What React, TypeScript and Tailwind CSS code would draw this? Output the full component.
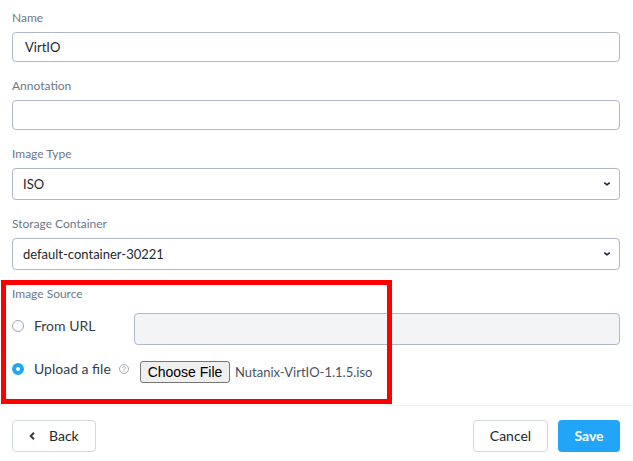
import { useRef, useState } from "react";
import type { ReactNode } from "react";

const control =
  "w-full rounded border border-[#b2b8c7] bg-white text-[13px] leading-5 text-[#22272e] outline-none";

function Field({ id, label, children }: { id: string; label: string; children: ReactNode }) {
  return (
    <div className="flex flex-col gap-1.5">
      <label htmlFor={id} className="text-xs leading-4 text-[#6b7888]">
        {label}
      </label>
      {children}
    </div>
  );
}

function SelectField({ id, label, options }: { id: string; label: string; options: string[] }) {
  return (
    <Field id={id} label={label}>
      <div className="relative flex">
        <select id={id} className={`${control} h-8 appearance-none pr-8 pl-2.5`}>
          {options.map((option) => (
            <option key={option}>{option}</option>
          ))}
        </select>
        <svg
          viewBox="0 0 6 4"
          className="pointer-events-none absolute top-3.5 right-2.5 h-1 w-1.5"
          fill="none"
          stroke="#1b1d3a"
          strokeWidth="1.6"
          aria-hidden="true"
        >
          <path d="M0.3 0.7 L3 2.8 L5.7 0.7" />
        </svg>
      </div>
    </Field>
  );
}

const radio =
  "h-3 w-3 shrink-0 appearance-none rounded-full border border-[#9aa5b5] bg-white checked:border-4 checked:border-[#22a5f7]";

export default function App() {
  const picker = useRef<HTMLInputElement>(null);
  const [source, setSource] = useState("file");
  const [fileName, setFileName] = useState("Nutanix-VirtIO-1.1.5.iso");

  return (
    <form
      className="bg-white font-['Lato','Liberation_Sans',sans-serif]"
      onSubmit={(event) => event.preventDefault()}
    >
      <div className="flex flex-col gap-4 px-3 pt-2.5 pr-[13px]">
        <Field id="name" label="Name">
          <input id="name" type="text" defaultValue="VirtIO" className={`${control} h-[30px] px-3`} />
        </Field>
        <Field id="annotation" label="Annotation">
          <input id="annotation" type="text" className={`${control} h-[30px] px-3`} />
        </Field>
        <SelectField id="type" label="Image Type" options={["ISO", "DISK"]} />
        <SelectField id="container" label="Storage Container" options={["default-container-30221"]} />

        <div role="radiogroup" aria-labelledby="source-title" className="relative pb-[22px]">
          <div id="source-title" className="text-xs leading-4 text-[#6b7888]">
            Image Source
          </div>
          <div className="mt-[11px] flex items-start">
            <label className="flex h-8 w-[122px] shrink-0 items-center gap-2.5 pb-1.5 text-sm text-[#343c49]">
              <input
                type="radio"
                name="source"
                className={radio}
                checked={source === "url"}
                onChange={() => setSource("url")}
              />
              From URL
            </label>
            <input
              type="text"
              aria-label="Image URL"
              disabled={source !== "url"}
              className="h-8 min-w-0 flex-1 rounded border border-[#b2b8c7] bg-white px-3 text-[13px] disabled:bg-[#f2f4f6]"
            />
          </div>
          <div className="mt-3.5 flex items-start">
            <div className="flex w-32 shrink-0 items-center gap-2">
              <label className="flex items-center gap-2.5 text-sm text-[#343c49]">
                <input
                  type="radio"
                  name="source"
                  className={radio}
                  checked={source === "file"}
                  onChange={() => setSource("file")}
                />
                Upload a file
              </label>
              <svg viewBox="0 0 10 10" className="h-2.5 w-2.5" fill="none" stroke="#8d99a8" strokeWidth="0.8" aria-hidden="true">
                <circle cx="5" cy="5" r="4.5" />
                <path d="M3.6 4 C3.6 2.1 6.5 2.1 6.5 3.8 C6.5 4.9 5 4.8 5 6 M5 6.9 V7.8" />
              </svg>
            </div>
            <div className="flex items-center gap-[5px] pt-0.5">
              <input
                ref={picker}
                type="file"
                hidden
                aria-label="Image file"
                onChange={(event) => setFileName(event.target.files?.[0]?.name ?? "No file chosen")}
              />
              <button
                type="button"
                onClick={() => picker.current?.click()}
                className="h-[22px] w-[90px] rounded-[3px] border border-[#767676] bg-[#efefef] font-['Liberation_Sans',Arial,sans-serif] text-sm leading-5 whitespace-nowrap text-black"
              >
                Choose File
              </button>
              <span className="text-[13px] leading-5 text-[#4a5361]">{fileName}</span>
            </div>
          </div>
          <div className="pointer-events-none absolute -top-1.5 bottom-px -left-[11px] w-[391px] border-[5px] border-[#fe0000]" />
        </div>
      </div>

      <footer className="flex items-center gap-2.5 border-t border-[#f0f1f3] px-3 py-3.5 pr-[13px]">
        <button
          type="button"
          className="mr-auto flex h-8 w-[84px] items-center gap-3.5 rounded border border-[#d3d8e0] pl-4 text-sm text-[#22272e]"
        >
          <svg viewBox="0 0 6 8" className="h-2 w-1.5" fill="none" stroke="#343c49" strokeWidth="2" aria-hidden="true">
            <path d="M5 0.7 L1.7 4 L5 7.3" />
          </svg>
          Back
        </button>
        <button type="button" className="h-8 w-[75px] rounded border border-[#d3d8e0] text-sm text-[#22272e]">
          Cancel
        </button>
        <button type="submit" className="h-8 w-[62px] rounded bg-[#22a5f7] text-sm font-bold text-white">
          Save
        </button>
      </footer>
    </form>
  );
}
